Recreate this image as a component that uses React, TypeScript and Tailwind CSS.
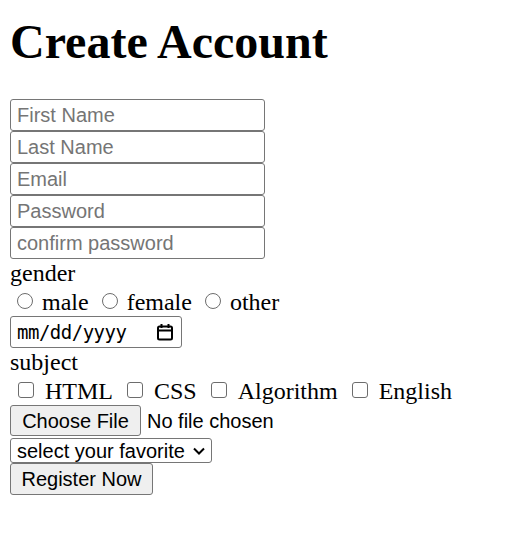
const fields = ['First Name', 'Last Name', 'Email', 'Password', 'confirm password'];
const genders = ['male', 'female', 'other'];
const subjects = ['HTML', 'CSS', 'Algorithm', 'English'];

export default function App() {
  return (
    <main className="min-h-screen bg-white px-[10px] text-black font-['Liberation_Serif',serif]">
      <h1 className="pt-[13px] pb-[28px] text-[48px] font-bold leading-[58px]">Create Account</h1>

      <form className="flex flex-col items-start">
        {fields.map((f) => (
          <input
            key={f}
            placeholder={f}
            className="h-[32px] w-[255px] rounded-[3px] border border-[#767676] px-[6px] text-[20px] font-['Liberation_Sans',sans-serif] placeholder:text-[#757575] outline-none"
          />
        ))}

        <div className="h-[28px] text-[24px] leading-[28px]">gender</div>
        <div className="flex h-[29px] items-center text-[24px] leading-[28px]">
          {genders.map((g, i) => (
            <label key={g} className="flex items-center">
              <span
                className={
                  (i === 0 ? 'ml-[7px] ' : 'ml-[13px] ') +
                  'mr-[9px] mt-[-2px] h-[16px] w-[16px] shrink-0 rounded-full border-[1.5px] border-[#6d6d6d]'
                }
              />
              <span>{g}</span>
            </label>
          ))}
        </div>

        <div className="flex h-[32px] w-[172px] items-center justify-between rounded-[3px] border border-[#767676] pl-[6px] pr-[7px] text-[19px] font-['DejaVu_Sans_Mono',monospace]">
          <span className="tracking-[-0.5px]">mm/dd/yyyy</span>
          <svg width="18" height="18" viewBox="0 0 18 18" fill="none" stroke="#000" strokeWidth="2">
            <rect x="2" y="3.5" width="14" height="13" rx="1.5" />
            <path d="M2 7.5h14M5.5 1v4M12.5 1v4" />
          </svg>
        </div>

        <div className="h-[28px] text-[24px] leading-[28px]">subject</div>
        <div className="flex h-[29px] items-center text-[24px] leading-[28px]">
          {subjects.map((s, i) => (
            <label key={s} className="flex items-center">
              <span
                className={
                  (i === 0 ? 'ml-[8px] ' : 'ml-[14px] ') +
                  'mr-[11px] mt-[-2px] h-[16px] w-[16px] shrink-0 rounded-[3px] border-[1.5px] border-[#6d6d6d]'
                }
              />
              <span>{s}</span>
            </label>
          ))}
        </div>

        <div className="flex items-center gap-[6px] font-['Liberation_Sans',sans-serif] text-[20px]">
          <button type="button" className="h-[31px] w-[131px] rounded-[3px] border border-[#767676] bg-[#efefef] text-[20px]">
            Choose File
          </button>
          <span>No file chosen</span>
        </div>

        <div className="mt-[2px] flex h-[25px] w-[202px] items-center justify-between rounded-[3px] border border-[#767676] pl-[6px] pr-[6px] font-['Liberation_Sans',sans-serif] text-[20px] leading-[22px]">
          <span>select your favorite</span>
          <svg width="12" height="8" viewBox="0 0 12 8" fill="none" stroke="#000" strokeWidth="2">
            <path d="M1 1.5l5 5 5-5" />
          </svg>
        </div>

        <button type="button" className="h-[32px] w-[143px] rounded-[3px] border border-[#767676] bg-[#efefef] font-['Liberation_Sans',sans-serif] text-[20px]">
          Register Now
        </button>
      </form>
    </main>
  );
}
